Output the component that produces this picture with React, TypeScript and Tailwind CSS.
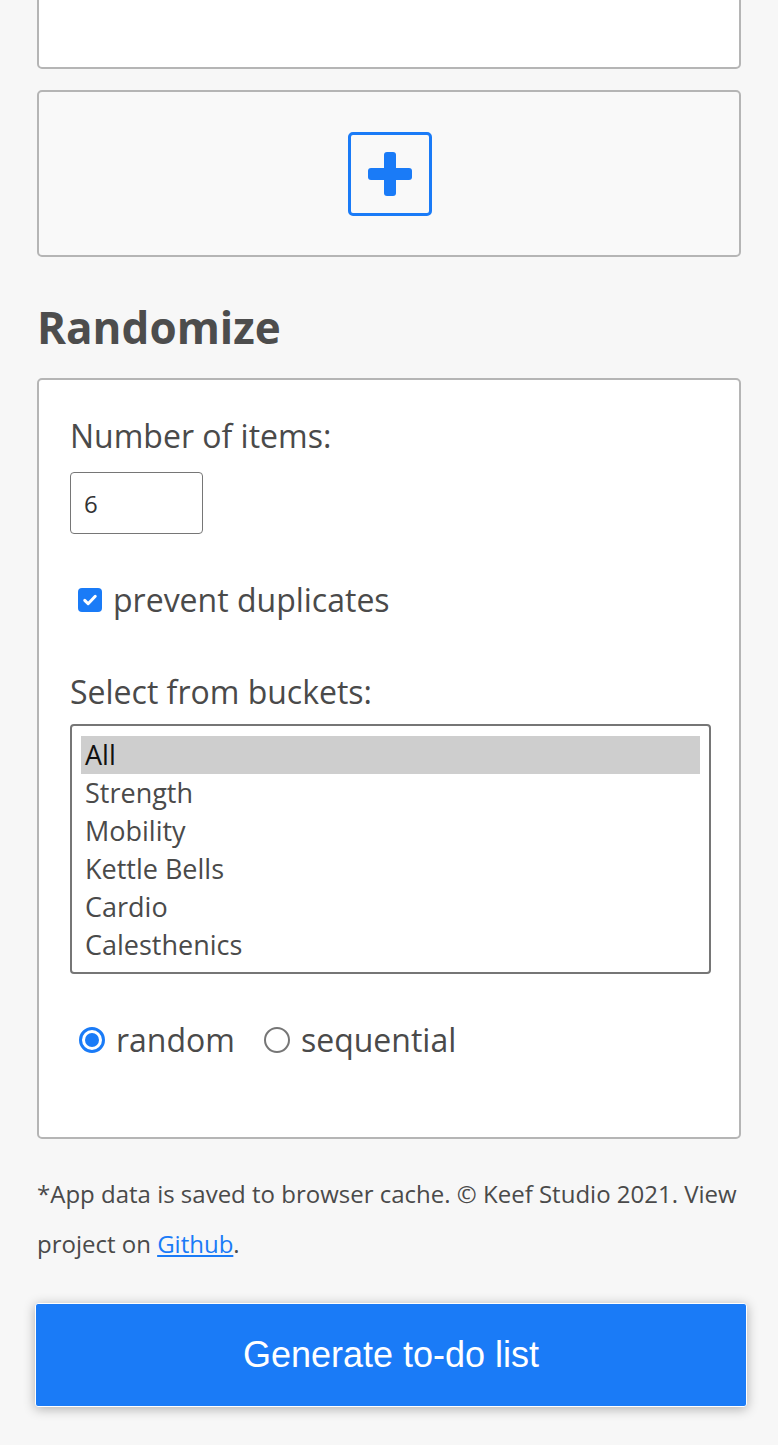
const buckets = ["All", "Strength", "Mobility", "Kettle Bells", "Cardio", "Calesthenics"];

export default function App() {
  return (
    <div className="min-h-[1445px] overflow-hidden bg-[#f7f7f7] px-[37px] font-['Open_Sans',sans-serif] text-[#4a4a4a]">
      {/* list card, scrolled partly out of view */}
      <div className="-mt-[51px] h-[120px] rounded-[5px] border-2 border-[#b5b5b5] bg-white"></div>

      {/* add new list */}
      <div className="mt-[21px] flex h-[167px] items-center justify-center rounded-[5px] border-2 border-[#b5b5b5] bg-[#f9f9f9]">
        <button className="ml-[2px] flex h-[84px] w-[84px] items-center justify-center rounded-[5px] border-[3px] border-[#1a7bf7]">
          <svg viewBox="0 0 44 44" className="h-[44px] w-[44px]" fill="#1a7bf7">
            <rect x="16" y="0" width="12" height="44" rx="3" />
            <rect x="0" y="16" width="44" height="12" rx="3" />
          </svg>
        </button>
      </div>

      <h2 className="mt-[40px] text-[44px] font-bold leading-[60px] text-[#4d4d4d]">Randomize</h2>

      <div className="mt-[21px] rounded-[5px] border-2 border-[#b5b5b5] bg-white px-[31px] pb-[75px] pt-[32px]">
        <label className="block text-[32px] leading-[48px]">Number of items:</label>
        <input
          defaultValue="6"
          className="mt-[12px] h-[62px] w-[133px] rounded-[4px] border border-[#767676] px-[13px] text-[24px] text-[#333] outline-none"
        />

        <label className="mt-[44px] flex items-center gap-[11px] pl-[8px] text-[32px] leading-[44px]">
          <span className="flex h-[24px] w-[24px] items-center justify-center rounded-[4px] bg-[#1a7bf7]">
            <svg viewBox="0 0 24 24" className="h-[18px] w-[18px]" fill="none" stroke="white" strokeWidth={4} strokeLinecap="round" strokeLinejoin="round">
              <path d="M5 12.5l4.5 4.5L19 7" />
            </svg>
          </span>
          prevent duplicates
        </label>

        <label className="mt-[46px] block text-[32px] leading-[48px]">Select from buckets:</label>
        <div className="mt-[8px] h-[250px] w-[641px] rounded-[4px] border-2 border-[#767676] px-[9px] pt-[10px]">
          {buckets.map((b, i) => (
            <div
              key={b}
              className={
                i === 0
                  ? "h-[38px] bg-[#cecece] px-[4px] text-[27px] leading-[38px] text-[#111]"
                  : "h-[38px] px-[4px] text-[27px] leading-[38px]"
              }
            >
              {b}
            </div>
          ))}
        </div>

        <div className="mt-[44px] flex items-center pl-[9px] text-[32px] leading-[44px]">
          <span className="flex h-[26px] w-[26px] items-center justify-center rounded-full border-[3px] border-[#1a7bf7]">
            <span className="h-[14px] w-[14px] rounded-full bg-[#1a7bf7]"></span>
          </span>
          <span className="ml-[11px]">random</span>
          <span className="ml-[29px] h-[26px] w-[26px] rounded-full border-2 border-[#767676]"></span>
          <span className="ml-[11px]">sequential</span>
        </div>
      </div>

      <p className="mt-[30px] text-[24px] leading-[50px]">
        *App data is saved to browser cache. © Keef Studio 2021. View project on{" "}
        <a href="#" className="text-[#1a7bf7] underline">
          Github
        </a>
        .
      </p>

      <button className="-ml-[2px] mt-[34px] h-[104px] w-[712px] rounded-[3px] border border-white bg-[#1a7bf7] font-['Liberation_Sans',Arial,sans-serif] text-[36px] text-white shadow-[0_2px_12px_rgba(0,0,0,0.3)]">
        Generate to-do list
      </button>
    </div>
  );
}
